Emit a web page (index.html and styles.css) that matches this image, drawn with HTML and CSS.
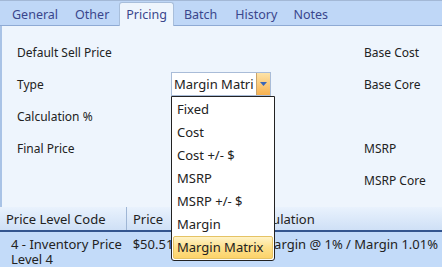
FILE: index.html
```html
<!DOCTYPE html>
<html>
<head>
<meta charset="utf-8">
<link rel="stylesheet" href="styles.css">
</head>
<body>
<div class="win">
  <div class="tabs">
    <div class="tab">General</div>
    <div class="tab t-other">Other</div>
    <div class="tab sel">Pricing</div>
    <div class="tab t-batch">Batch</div>
    <div class="tab t-history">History</div>
    <div class="tab t-notes">Notes</div>
  </div>
  <div class="panel">
    <div class="form">
      <div class="lbl">Default Sell Price</div><div></div><div class="lbl">Base Cost</div>
      <div class="lbl">Type</div>
      <div class="combo-cell">
        <div class="combo">
          <span class="combo-text">Margin Matri</span>
          <span class="combo-btn"><svg width="7" height="4" viewBox="0 0 7 4"><path d="M0 0H7L3.5 4Z" fill="#3a66b8"/></svg></span>
        </div>
        <div class="dropdown">
          <div class="item">Fixed</div>
          <div class="item">Cost</div>
          <div class="item">Cost +/- $</div>
          <div class="item">MSRP</div>
          <div class="item">MSRP +/- $</div>
          <div class="item">Margin</div>
          <div class="item hi">Margin Matrix</div>
        </div>
      </div>
      <div class="lbl">Base Core</div>
      <div class="lbl">Calculation %</div><div></div><div></div>
      <div class="lbl">Final Price</div><div></div><div class="lbl">MSRP</div>
      <div></div><div></div><div class="lbl">MSRP Core</div>
    </div>
    <div class="grid">
      <div class="ghead">
        <div class="c1 hc">Price Level Code</div>
        <div class="c2 hc">Price</div>
        <div class="c3 hc">Calculation</div>
      </div>
      <div class="grow">
        <div class="c1 rc">4 - Inventory Price Level 4</div>
        <div class="c2 rc">$50.51</div>
        <div class="c3 rc calc">Margin @ 1% / Margin 1.01%</div>
      </div>
    </div>
  </div>
</div>
</body>
</html>
```
FILE: styles.css
```css
* { box-sizing: border-box; }
html, body { margin: 0; padding: 0; }
body {
  width: 442px; height: 267px; overflow: hidden;
  font-family: "Noto Sans", "Open Sans", sans-serif;
  font-size: 12px;
  color: #222;
  background: #eef5fd;
}
.win { display: flex; flex-direction: column; height: 267px; }
.tabs {
  height: 26px;
  display: flex;
  align-items: flex-end;
  background: #bfd7f7;
  border-top: 1px solid #a3b8d6;
  border-bottom: 1px solid #8eaad4;
  padding-left: 4px;
  flex-shrink: 0;
}
.tab {
  height: 23px;
  line-height: 21px;
  padding: 0 7px;
  color: #3a468c;
  margin-bottom: -1px;
  border: 1px solid transparent;
  border-bottom: none;
  font-size: 12.5px;
}
.t-other { margin-left: 1px; }
.t-batch { margin-left: 2px; }
.t-history { margin-left: 2px; }
.t-notes { margin-left: 0; }
.tab.sel {
  margin-left: 2px;
  padding: 0 6px;
  background: #eef5fd;
  border-color: #a8bedb;
  border-radius: 3px 3px 0 0;
  height: 24px;
  line-height: 23px;
}
.panel {
  flex: 1;
  display: flex;
  flex-direction: column;
  background: #eef5fd;
  position: relative;
}
.form {
  display: grid;
  grid-template-columns: 154px 193px 1fr;
  grid-auto-rows: 32px;
  padding: 10px 0 0 15px;
  height: 181px;
  border-left: 2px solid #a9c3e6;
}
.lbl { display: flex; align-items: center; }
.combo-cell { position: relative; display: flex; align-items: center; }
.combo {
  width: 100px; height: 24px;
  border: 1px solid #a9bcd8;
  background: #fff;
  display: flex;
  align-items: stretch;
}
.combo-text { flex: 1; padding-left: 2px; line-height: 22px; font-size: 13px; color: #222; white-space: nowrap; overflow: hidden; }
.combo-btn {
  width: 14px;
  background: linear-gradient(#fde3a8, #f7b14f);
  border-left: 1px solid #c9a46b;
  display: flex; align-items: center; justify-content: center;
}
.dropdown {
  position: absolute;
  left: 0; top: 28px;
  width: 104px;
  height: 165px;
  background: #fff;
  border: 1px solid #222;
  border-radius: 0 0 3px 3px;
  padding: 1px 1px;
  z-index: 5;
}
.item {
  height: 23px;
  line-height: 23px;
  padding-left: 4px;
  font-size: 13px;
  color: #222;
}
.item.hi {
  background: linear-gradient(#fff3c8, #fde08c 50%, #fcd36a);
  border: 1px solid #e5c365;
  border-radius: 2px;
  line-height: 21px;
  padding-left: 3px;
}
.grid { display: flex; flex-direction: column; }
.ghead {
  height: 25px;
  display: flex;
  background: linear-gradient(#e9f2fd, #cfe0f6);
  border-bottom: 2px solid #33558f;
}
.grow {
  height: 35px;
  display: flex;
  background: #c3dbf9;
}
.c1 { width: 127px; }
.c2 { width: 114px; }
.c3 { flex: 1; }
.hc {
  padding-left: 6px;
  line-height: 24px;
  font-size: 13px;
  border-right: 1px solid #9fb6d5;
}
.hc.c3 { border-right: none; padding-left: 6px; }
.rc {
  padding: 5px 4px 0 11px;
  line-height: 15px;
  font-size: 13px;
}
.rc.c2 { padding-left: 6px; }
.rc.calc { padding-left: 22px; white-space: nowrap; }
```
